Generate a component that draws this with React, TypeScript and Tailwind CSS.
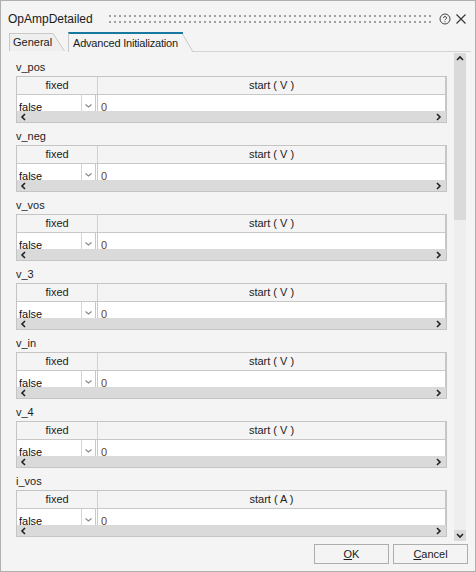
import React from 'react';

interface Sec {
  name: string;
  unit: string;
}

const sections: Sec[] = [
  { name: 'v_pos', unit: 'V' },
  { name: 'v_neg', unit: 'V' },
  { name: 'v_vos', unit: 'V' },
  { name: 'v_3', unit: 'V' },
  { name: 'v_in', unit: 'V' },
  { name: 'v_4', unit: 'V' },
  { name: 'i_vos', unit: 'A' },
];

const Chevron = ({ dir }: { dir: 'up' | 'down' | 'left' | 'right' }) => {
  const d = {
    up: 'M1 5 L4 2 L7 5',
    down: 'M1 2 L4 5 L7 2',
    left: 'M5 1 L2 4 L5 7',
    right: 'M2 1 L5 4 L2 7',
  }[dir];
  return (
    <svg width="8" height="8" viewBox="0 0 8 8">
      <path d={d} fill="none" stroke="#222" strokeWidth="1.6" />
    </svg>
  );
};

const ParamTable = ({ sec }: { sec: Sec }) => (
  <div className="mb-[4px]">
    <div className="h-[18px] flex items-center text-[11px] text-[#1e1e1e]">{sec.name}</div>
    <div className="w-[431px] h-[47px] border border-[#c4c4c4] flex flex-col">
      {/* header */}
      <div className="h-[18px] flex border-b border-[#c8c8c8] text-[11px] text-[#222]">
        <div className="w-[81px] border-r border-[#d0d0d0] flex items-center justify-center">fixed</div>
        <div className="flex-1 flex items-center justify-center border-r border-[#c8c8c8]">start ( {sec.unit} )</div>
      </div>
      {/* data row, text is cut by the scrollbar like the original */}
      <div className="h-[16px] flex overflow-hidden text-[11px] leading-[14px]">
        <div className="w-[65px] bg-white border-r border-[#d4d4d4] pl-[2px] pt-[5px] text-[#111]">false</div>
        <div className="w-[13px] bg-white flex justify-center pt-[9px]">
          <svg width="7" height="4" viewBox="0 0 7 4">
            <path d="M0.5 0.5 L3.5 3 L6.5 0.5" fill="none" stroke="#8a8a8a" strokeWidth="1.2" />
          </svg>
        </div>
        <div className="w-[3px] border-l border-r border-[#c8c8c8] bg-white" />
        <div className="flex-1 bg-white border-r border-[#c8c8c8] pl-[3px] pt-[5px] text-[#6a4220]">0</div>
      </div>
      {/* horizontal scrollbar */}
      <div className="h-[11px] bg-[#dadada] flex items-center justify-between px-[3px]">
        <Chevron dir="left" />
        <Chevron dir="right" />
      </div>
    </div>
  </div>
);

export default function App() {
  return (
    <div className="w-[476px] h-[572px] border border-[#b0b0b0] bg-[#f4f4f4] flex flex-col overflow-hidden font-['Liberation_Sans',Arial,sans-serif]">
      {/* title bar */}
      <div className="h-[30px] pt-[6px] flex items-center pl-[7px] pr-[8px]">
        <span className="text-[12px] text-[#1a1a1a] w-[101px]">OpAmpDetailed</span>
        <svg width="322" height="8" viewBox="0 0 322 8">
          <defs>
            <pattern id="grip" width="5" height="8" patternUnits="userSpaceOnUse">
              <rect x="0" y="0" width="2" height="2" fill="#a0a0a0" />
              <rect x="0" y="6" width="2" height="2" fill="#a0a0a0" />
            </pattern>
          </defs>
          <rect width="322" height="8" fill="url(#grip)" />
        </svg>
        <div className="flex-1" />
        <svg width="12" height="12" viewBox="0 0 12 12" className="mr-[4px]">
          <circle cx="6" cy="6" r="5" fill="none" stroke="#444" strokeWidth="1" />
          <path d="M4.3 4.8 C4.3 3.2 7.7 3.2 7.7 4.8 C7.7 6 6 6 6 7.2" fill="none" stroke="#444" strokeWidth="1" />
          <rect x="5.5" y="8.2" width="1" height="1" fill="#444" />
        </svg>
        <svg width="12" height="12" viewBox="0 0 12 12">
          <path d="M1.5 1.5 L10.5 10.5 M10.5 1.5 L1.5 10.5" stroke="#333" strokeWidth="1.1" />
        </svg>
      </div>

      {/* tab strip */}
      <div className="h-[21px] flex items-end pl-[8px] text-[11px] text-[#1a1a1a] whitespace-nowrap">
        <div className="flex items-end h-[18px] mb-[1px]">
          <div className="h-full w-[44px] border-l border-t border-[#c8c8c8] bg-[#efefef] pl-[3px] flex items-center">General</div>
          <svg width="12" height="18" viewBox="0 0 12 18" className="shrink-0">
            <path d="M0 0 L12 18 L0 18 Z" fill="#efefef" />
            <path d="M0 0.5 L11.5 18" stroke="#c8c8c8" strokeWidth="1" fill="none" />
          </svg>
        </div>
        <div className="flex items-end h-[20px] ml-[3px]">
          <div className="h-full w-[114px] border-l border-[#c8c8c8] border-t-2 border-t-[#17799f] pl-[4px] flex items-center tracking-[-0.2px]">Advanced Initialization</div>
          <svg width="11" height="20" viewBox="0 0 11 20" className="shrink-0">
            <rect x="0" y="0" width="1" height="2" fill="#17799f" />
            <path d="M0.5 2 L11 20" stroke="#c8c8c8" strokeWidth="1" fill="none" />
          </svg>
        </div>
        <div className="flex-1 border-b border-[#d4d4d4] mr-[4px]" />
      </div>

      {/* content */}
      <div className="h-[489px] flex overflow-hidden">
        <div className="pl-[15px] pt-[6px] w-[453px]">
          {sections.map((s) => (
            <ParamTable key={s.name} sec={s} />
          ))}
        </div>
        <div className="w-[12px] mt-[1px] flex flex-col bg-[#eeeeee]">
          <div className="h-[167px] bg-[#dadada] flex justify-center pt-[2px]">
            <Chevron dir="up" />
          </div>
          <div className="flex-1" />
          <div className="h-[11px] bg-[#dadada] flex items-center justify-center">
            <Chevron dir="down" />
          </div>
        </div>
      </div>

      {/* footer */}
      <div className="h-[29px] pt-[3px] flex justify-end gap-[4px] pr-[7px] text-[11px] text-[#1a1a1a]">
        <button className="w-[75px] h-[20px] border border-[#adadad] bg-[#f4f4f4] flex items-center justify-center">
          <span><span className="underline">O</span>K</span>
        </button>
        <button className="w-[75px] h-[20px] border border-[#adadad] bg-[#f4f4f4] flex items-center justify-center">
          <span><span className="underline">C</span>ancel</span>
        </button>
      </div>
    </div>
  );
}
